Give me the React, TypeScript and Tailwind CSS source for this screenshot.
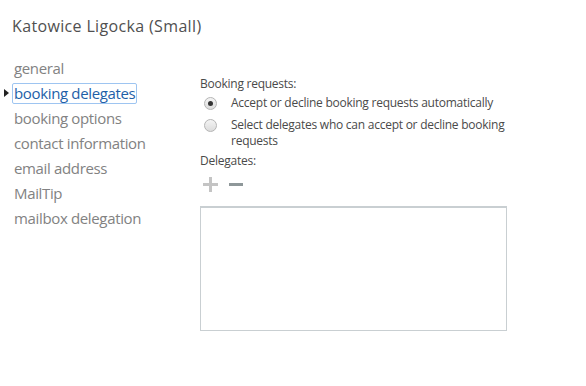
import React from 'react';

const navItems = [
  'general',
  'booking delegates',
  'booking options',
  'contact information',
  'email address',
  'MailTip',
  'mailbox delegation',
];

const Radio = ({ checked }: { checked?: boolean }) => (
  <span className="mt-[2px] flex h-[13px] w-[13px] shrink-0 items-center justify-center rounded-full border border-[#b5b5b5] bg-gradient-to-b from-[#f4f4f4] to-[#dcdcdc]">
    {checked && <span className="h-[5px] w-[5px] rounded-full bg-[#333]" />}
  </span>
);

const App: React.FC = () => {
  const selected = 'booking delegates';

  return (
    <div className="h-[386px] w-[586px] bg-white font-['Open_Sans',sans-serif] text-[#333]">
      <div className="px-[12px] pt-[14px] text-[16px] leading-[24px] tracking-[0.35px] text-[#505050]">
        Katowice Ligocka (Small)
      </div>

      <div className="mt-[18px] flex">
        {/* left nav */}
        <ul className="w-[200px] shrink-0 pl-[12px]">
          {navItems.map((item) => {
            const active = item === selected;
            return (
              <li key={item} className="relative h-[25px]">
                {active && (
                  <span className="absolute left-[-8px] top-[8px] h-0 w-0 border-y-[4px] border-l-[5px] border-y-transparent border-l-[#222]" />
                )}
                <span
                  className={
                    'inline-block h-[21px] pl-[1px] pr-[1px] text-[15px] leading-[19px] tracking-[-0.35px] ' +
                    (active
                      ? 'rounded-[2px] border border-[#9ec5f1] text-[#1e5fa8]'
                      : 'border border-transparent text-[#828282]')
                  }
                >
                  {item}
                </span>
              </li>
            );
          })}
        </ul>

        {/* right pane */}
        <div className="pt-[20px] text-[12px] leading-[16px] tracking-[-0.25px] text-[#4a4a4a]">
          <div>Booking requests:</div>
          <div className="mt-[3px] flex flex-col gap-[6px] pl-[4px]">
            <label className="flex gap-[14px]">
              <Radio checked />
              <span>Accept or decline booking requests automatically</span>
            </label>
            <label className="flex gap-[14px]">
              <Radio />
              <span className="w-[282px]">Select delegates who can accept or decline booking requests</span>
            </label>
          </div>
          <div className="mt-[4px]">Delegates:</div>
          <div className="mt-[8px] flex items-center gap-[11px] pl-[3px]">
            <svg width="15" height="15" viewBox="0 0 15 15">
              <rect x="0" y="6" width="15" height="3" fill="#c4c4c4" />
              <rect x="6" y="0" width="3" height="15" fill="#c4c4c4" />
            </svg>
            <svg width="14" height="3" viewBox="0 0 14 3">
              <rect x="0" y="0" width="14" height="3" fill="#8e9799" />
            </svg>
          </div>
          <div className="mt-[14px] h-[125px] w-[307px] border border-t-2 border-[#c9cfd2]" />
        </div>
      </div>
    </div>
  );
};

export default App;
